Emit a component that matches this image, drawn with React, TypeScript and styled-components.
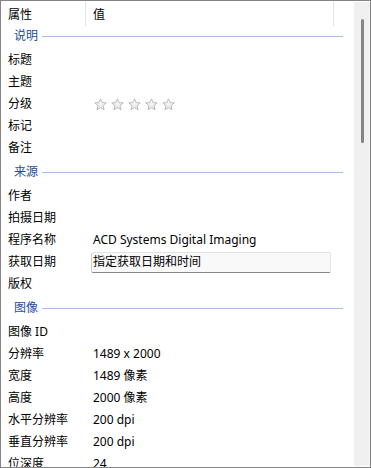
import React from "react";
import styled, { createGlobalStyle } from "styled-components";

const GlobalStyle = createGlobalStyle`
  html, body {
    margin: 0;
    padding: 0;
    background: #ffffff;
  }
  body {
    font-family: "Noto Sans", "Noto Sans CJK SC", sans-serif;
    font-size: 12px;
    color: #000000;
  }
`;

type Item = { label: string; value?: string; kind?: "stars" | "input" };
type Group = { title: string; items: Item[] };

const groups: Group[] = [
  {
    title: "说明",
    items: [
      { label: "标题" },
      { label: "主题" },
      { label: "分级", kind: "stars" },
      { label: "标记" },
      { label: "备注" },
    ],
  },
  {
    title: "来源",
    items: [
      { label: "作者" },
      { label: "拍摄日期" },
      { label: "程序名称", value: "ACD Systems Digital Imaging" },
      { label: "获取日期", value: "指定获取日期和时间", kind: "input" },
      { label: "版权" },
    ],
  },
  {
    title: "图像",
    items: [
      { label: "图像 ID" },
      { label: "分辨率", value: "1489 x 2000" },
      { label: "宽度", value: "1489 像素" },
      { label: "高度", value: "2000 像素" },
      { label: "水平分辨率", value: "200 dpi" },
      { label: "垂直分辨率", value: "200 dpi" },
      { label: "位深度", value: "24" },
    ],
  },
];

const Star: React.FC = () => (
  <svg width="13" height="13" viewBox="0 0 13 13">
    <defs>
      <linearGradient id="starFill" x1="0" y1="0" x2="0" y2="1">
        <stop offset="0" stopColor="#ffffff" />
        <stop offset="1" stopColor="#e4e4e4" />
      </linearGradient>
    </defs>
    <path
      d="M6.5 0.8 L8.1 4.6 L12.2 4.9 L9.1 7.6 L10.1 11.8 L6.5 9.6 L2.9 11.8 L3.9 7.6 L0.8 4.9 L4.9 4.6 Z"
      fill="url(#starFill)"
      stroke="#b4b4b4"
      strokeWidth="0.9"
      strokeLinejoin="round"
    />
  </svg>
);

const App: React.FC = () => {
  return (
    <>
      <GlobalStyle />
      <StyledFrame>
        <StyledContent>
          <StyledHeader>
            <StyledHeaderCell $width={85}>属性</StyledHeaderCell>
            <StyledHeaderCell $width={248}>值</StyledHeaderCell>
          </StyledHeader>
          {groups.map((group) => (
            <React.Fragment key={group.title}>
              <StyledSection>
                <StyledSectionTitle>{group.title}</StyledSectionTitle>
                <StyledSectionLine />
              </StyledSection>
              {group.items.map((item) => (
                <StyledRow key={item.label}>
                  <StyledLabel>{item.label}</StyledLabel>
                  {item.kind === "stars" ? (
                    <StyledStars>
                      {[0, 1, 2, 3, 4].map((i) => (
                        <Star key={i} />
                      ))}
                    </StyledStars>
                  ) : item.kind === "input" ? (
                    <StyledInput>{item.value}</StyledInput>
                  ) : (
                    <StyledValue>{item.value}</StyledValue>
                  )}
                </StyledRow>
              ))}
            </React.Fragment>
          ))}
        </StyledContent>
        <StyledScrollbar>
          <StyledThumb />
        </StyledScrollbar>
      </StyledFrame>
    </>
  );
};

const StyledFrame = styled.div`
  box-sizing: border-box;
  display: flex;
  width: 371px;
  height: 468px;
  border: 1px solid #858585;
  background: #ffffff;
  overflow: hidden;
`;

const StyledContent = styled.div`
  flex: 1;
  min-width: 0;
  overflow: hidden;
`;

const StyledHeader = styled.div`
  display: flex;
  height: 22px;
`;

const StyledHeaderCell = styled.div<{ $width: number }>`
  box-sizing: border-box;
  display: flex;
  align-items: center;
  width: ${(p) => p.$width}px;
  height: 24px;
  margin-top: 1px;
  padding: 1px 0 0 7px;
  border-right: 1px solid #e3e3e3;
  line-height: 1;
`;

const StyledSection = styled.div`
  display: flex;
  align-items: center;
  height: 26px;
  padding: 0 11px 0 13px;
`;

const StyledSectionTitle = styled.span`
  color: #1d4aa6;
  margin-right: 4px;
  line-height: 1;
`;

const StyledSectionLine = styled.div`
  flex: 1;
  height: 1px;
  background: #a8bee4;
`;

const StyledRow = styled.div`
  display: flex;
  align-items: center;
  height: 22px;
`;

const StyledLabel = styled.div`
  box-sizing: border-box;
  width: 85px;
  padding-left: 7px;
  white-space: nowrap;
  line-height: 1;
`;

const StyledValue = styled.div`
  padding-left: 7px;
  white-space: nowrap;
  line-height: 1;
`;

const StyledStars = styled.div`
  display: flex;
  gap: 4px;
  padding-left: 8px;
`;

const StyledInput = styled.div`
  box-sizing: border-box;
  display: flex;
  align-items: center;
  width: 240px;
  height: 21px;
  margin-left: 5px;
  padding-left: 1px;
  background: #f9f9f9;
  border: 1px solid #e2e2e2;
  border-left-color: #cfcfcf;
  border-bottom-color: #8a8a8a;
  border-radius: 2px;
  white-space: nowrap;
  line-height: 1;
`;

const StyledScrollbar = styled.div`
  display: flex;
  justify-content: center;
  width: 16px;
  margin: 1px 0;
  padding-top: 17px;
  background: #f0f0f0;
  box-sizing: border-box;
`;

const StyledThumb = styled.div`
  width: 3px;
  height: 124px;
  background: #858585;
  border-radius: 1.5px;
`;

export default App;
